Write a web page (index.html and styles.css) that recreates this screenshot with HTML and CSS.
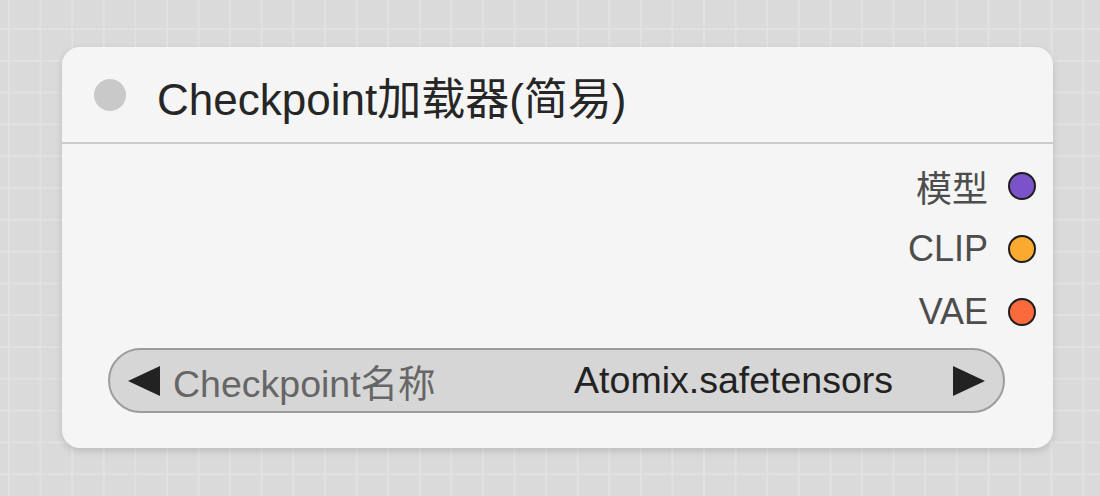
FILE: index.html
```html
<!DOCTYPE html>
<html lang="zh">

<head>
  <meta charset="UTF-8">
  <meta name="viewport" content="width=device-width, initial-scale=1.0">
  <title>Checkpoint加载器(简易)</title>

  <link rel="stylesheet" href="styles.css">
</head>

<body>
  <main class="canvas">
    <section class="node">
      <header class="node-head">
        <span class="node-dot"></span>
        <h1 class="node-title">Checkpoint加载器(简易)</h1>
      </header>

      <ul class="outputs">
        <li class="slot">模型 <span class="slot-dot model"></span></li>
        <li class="slot">CLIP <span class="slot-dot clip"></span></li>
        <li class="slot">VAE <span class="slot-dot vae"></span></li>
      </ul>

      <div class="combo">
        <svg class="arrow" width="32" height="30" viewBox="0 0 32 30">
          <polygon points="32,0 32,30 0,15" fill="#222" />
        </svg>
        <span class="combo-label">Checkpoint名称</span>
        <span class="combo-value">Atomix.safetensors</span>
        <svg class="arrow" width="32" height="30" viewBox="0 0 32 30">
          <polygon points="0,0 0,30 32,15" fill="#222" />
        </svg>
      </div>
    </section>
  </main>
</body>

</html>
```

FILE: styles.css
```css
html,
body {
  height: 100%;
  margin: 0;
}

body {
  background-color: #dadada;
  background-image:
    linear-gradient(to right, #e1e1e1 2px, transparent 2px),
    linear-gradient(to bottom, #e1e1e1 2px, transparent 2px);
  background-position: 8px 28px;
  background-size: 31.6px 31.8px;
  font-family: "Liberation Sans", "Noto Sans CJK SC", sans-serif;
}

.canvas {
  padding: 47px 0 0 62px;
}

.node {
  background: #f5f5f5;
  border-radius: 18px;
  box-shadow: 0 3px 7px rgba(0, 0, 0, 0.14);
  box-sizing: border-box;
  height: 401px;
  width: 991px;
}

.node-head {
  align-items: center;
  border-bottom: 2px solid #cbcbcb;
  column-gap: 31px;
  display: flex;
  height: 95px;
  padding-left: 32px;
}

.node-dot {
  background: #c9c9c9;
  border-radius: 50%;
  height: 32px;
  width: 32px;
}

.node-title {
  color: #262626;
  font-size: 44px;
  font-weight: normal;
  margin: 0;
  padding-top: 3px;
}

.outputs {
  list-style: none;
  margin: 0;
  padding: 10px 17px 0 0;
}

.slot {
  align-items: center;
  color: #4d4d4d;
  column-gap: 20px;
  display: flex;
  font-size: 36px;
  height: 63px;
  justify-content: flex-end;
}

.slot-dot {
  border: 2px solid #1e1e1e;
  border-radius: 50%;
  box-sizing: border-box;
  height: 28px;
  width: 28px;
}

.model {
  background: #7b52c8;
}

.clip {
  background: #fba92f;
}

.vae {
  background: #fa6a3c;
}

.combo {
  align-items: center;
  background: #d6d6d6;
  border: 2px solid #9c9c9c;
  border-radius: 33px;
  box-sizing: border-box;
  display: flex;
  font-size: 37.5px;
  height: 65px;
  margin: 5px 48px 0 46px;
  padding: 0 18px;
}

.combo-label {
  color: #666;
  flex: 1;
  margin-left: 13px;
}

.combo-value {
  color: #222;
  margin-right: 60px;
}
```
